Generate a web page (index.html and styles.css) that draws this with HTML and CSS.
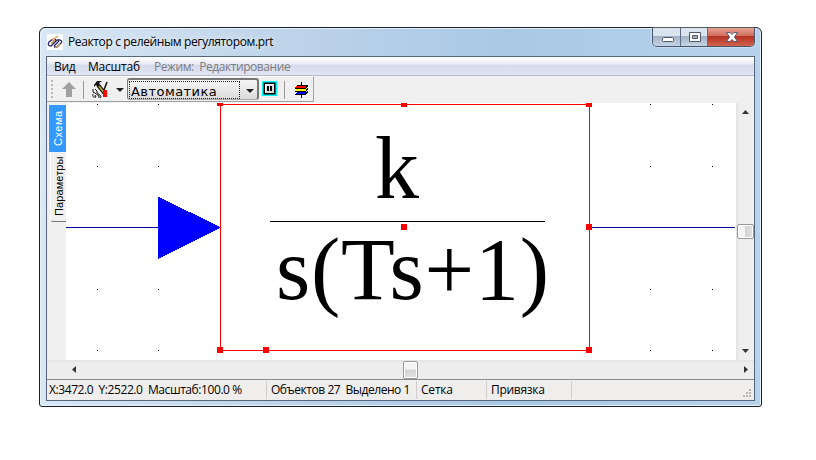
FILE: index.html
```html
<!DOCTYPE html>
<html lang="ru">
<head>
<meta charset="utf-8">
<title>Реактор с релейным регулятором.prt</title>
<link rel="stylesheet" href="styles.css">
</head>
<body>
<main class="window">
  <header class="titlebar">
    <svg class="logo" width="16" height="16" fill="none"><path fill="#fff" d="M0 0h16v16H0z"/><path d="M6 5 2 8q-2 4 2 4l6-6M5 9l4-4M7 12l5-5M10 6h3q3 1 1 3l-4 4H7" stroke="#292968" stroke-width="1.300"/><path d="m5 6 6-4M8 14l5-4M4 10l4-4" stroke="#e89d4c" stroke-width="1.200"/></svg>
    <h1 class="title">Реактор с релейным регулятором.prt</h1>
    <div class="controls">
      <span class="ctl"><svg width="28" height="18"><rect x="9.500" y="9.500" width="11" height="4" rx="1" fill="#fff" stroke="#53576a"/></svg></span>
      <span class="ctl ctl-max"><svg width="26" height="18"><path fill="#fff" fill-rule="evenodd" stroke="#53576a" d="M8.500 4.500h11v9h-11zM11.500 7.500v3h5v-3z"/></svg></span>
      <span class="ctl ctl-close"><svg width="46" height="18"><path d="M18.500 4.500h3.500l2 2 2-2h3.500l-3 4.500 3 4.500h-3.500l-2-2-2 2h-3.500l3-4.500z" fill="#fff" stroke="#59566b"/></svg></span>
    </div>
  </header>
  <section class="client">
    <nav class="menu"><span class="m1">Вид</span><span class="m2">Масштаб</span><span class="m3">Режим:&nbsp; Редактирование</span></nav>
    <div class="toolbar">
      <div class="tools">
        <i class="grip"></i>
        <svg class="up" width="14" height="15"><path d="M7 0l7 7h-4v8H4V7H0z" fill="#a0a0a0"/></svg>
        <i class="sep"></i>
        <svg class="hammer" width="17" height="17"><path d="m6 4 8 10" stroke="#111" stroke-width="4"/><path d="m6 4 8 10" stroke="#aaa02a" stroke-width="2"/><path d="M2 4 5 0h5L7 2l1 2-2 2-2-2-2 2z" fill="#111"/><path d="m15 1-3 8" stroke="#111" stroke-width="1.500"/><path d="M11 9h4v7h-4z" fill="#f00"/><path d="M1 8v3l2 1 4 3v2M3 8l2 2v2l3 2q2 2 0 3M1 13q-1 4 3 3l-1-2" fill="none" stroke="#111"/></svg>
        <i class="drop"></i>
        <div class="combo"><span class="combo-label">Автоматика</span><i class="drop"></i></div>
        <svg class="pause" width="15" height="15"><path fill="#00f5f5" d="M0 0h15v15H0z"/><path fill="#000" d="M1.500 1.500h12v12h-12z"/><path fill="#fff" d="M3 3h9v9H3z"/><path fill="#ddd" d="M4 4h8v8H4z"/><path d="M5 5h2v5H5zM8 5h2v5H8z"/></svg>
        <i class="sep sep2"></i>
        <svg class="layers" width="14" height="16" shape-rendering="crispEdges"><path d="M7.500 0v16" stroke="#000"/><path d="M3 3h11l-2 3H1z" fill="#f00"/><path d="M3 6h11l-2 4H1z" fill="#ff0"/><path d="M3 10h10l-2 3H1z" fill="#00f"/><path d="M3 3h10M1 6h11l2-3M1 9h11l2-3M1 12h11l2-3" fill="none" stroke="#000"/></svg>
      </div>
    </div>
    <div class="work">
      <aside class="tabs"><span class="tab tab-on">Схема</span><span class="tab tab-off">Параметры</span></aside>
      <svg class="canvas" width="670" height="257" viewBox="66 103 670 257">
        <g shape-rendering="crispEdges">
          <path class="dots" d="M97 104.500h1M158 104.500h1M650 104.500h1M712 104.500h1M97 166.500h1M158 166.500h1M650 166.500h1M712 166.500h1M97 289.500h1M158 289.500h1M650 289.500h1M712 289.500h1M97 350.500h1M158 350.500h1M650 350.500h1M712 350.500h1"/>
          <path class="wire" d="M66 227.500h93M589 227.500h146"/>
          <path class="arrow" d="M158 196.500v62.500l63-31.500z"/>
          <path class="frame" d="M220.500 104.500h369v246h-369z"/>
          <path class="bar" d="M270 221.500h275"/>
        </g>
        <text class="formula" x="375" y="198">k</text>
        <text class="formula" x="276" y="299" textLength="273">s(Ts+1)</text>
        <path class="handles" shape-rendering="crispEdges" d="M217 103h6v3h-6zM401 103h6v4h-6zM586 103h6v4h-6zM401 224h6v6h-6zM586 224h6v6h-6zM217 347h6v6h-6zM263 347h6v6h-6zM586 347h6v6h-6z"/>
      </svg>
      <div class="vscroll"><svg class="arr" width="7" height="4"><path d="M0 4 3.500 0 7 4z"/></svg><i class="thumb-v"></i><svg class="arr" width="7" height="4"><path d="M0 0h7L3.500 4z"/></svg></div>
    </div>
    <div class="hscroll"><svg class="arr" width="4" height="7"><path d="M4 0v7L0 3.500z"/></svg><i class="thumb-h"></i><svg class="arr" width="4" height="7"><path d="M0 0v7l4-3.500z"/></svg></div>
    <footer class="status">
      <span class="cell c1">X:3472.0&nbsp; Y:2522.0&nbsp; Масштаб:100.0 %</span><span class="cell c2">Объектов 27&nbsp; Выделено 1</span><span class="cell c3">Сетка</span><span class="cell c4">Привязка</span>
      <svg class="size-grip" width="9" height="9"><path fill="#b8b5b5" d="M6 0h2v2H6zM3 3h2v2H3zM6 3h2v2H6zM0 6h2v2H0zM3 6h2v2H3zM6 6h2v2H6z"/></svg>
    </footer>
  </section>
</main>
</body>
</html>
```
FILE: styles.css
```css
* { box-sizing: border-box; }
body { margin: 0; background: #fff; font: 12px "Open Sans", "Noto Sans", sans-serif; color: #000; }
svg { flex: none; }
.window { width: 723px; height: 380px; margin: 27px 0 0 39px; padding: 0 6px 5px; border: 1px solid #1c2026; border-radius: 6px 6px 3px 3px; background: linear-gradient(90deg, #d9e7f5, #bdd3e9 35%, #a9c8e5 65%, #b7d3ec); box-shadow: inset 0 0 0 1px #e5f2fc; }
.titlebar { display: flex; height: 28px; }
.logo { margin: 6px 0 0 1px; }
.title { margin: 5px 0 0 5px; font-size: 12px; line-height: 18px; font-weight: 400; white-space: nowrap; letter-spacing: -.37px; text-shadow: 0 0 6px #fff; }
.controls { display: flex; width: 103px; height: 19px; margin-left: auto; border: 1px solid #47566d; border-top: 0; border-radius: 0 0 5px 5px; overflow: hidden; box-shadow: 0 0 2px #fff; }
.ctl { width: 28px; border-right: 1px solid #5d6d84; background: linear-gradient(#dbe4ee 0 45%, #a2b2c6 46%, #c5d4e5); }
.ctl svg { display: block; }
.ctl-max { width: 27px; }
.ctl-close { width: 46px; border: 0; background: linear-gradient(#e5a394, #cf6a58 45%, #b5301e 46%, #cf6550); }
.client { width: 709px; height: 345px; border: 1px solid #56677d; background: #f0f0f0; }
.menu { display: flex; height: 19px; border-bottom: 1px solid #b6bccc; background: linear-gradient(#fff, #e6eaf5 40%, #d4dbed 45%, #e0e5f5); line-height: 20px; white-space: nowrap; }
.m1 { width: 34px; margin-left: 7px; letter-spacing: -.3px; }
.m2 { width: 66px; letter-spacing: -.2px; }
.m3 { color: #7d7d7d; letter-spacing: -.43px; }
.toolbar { height: 27px; }
.tools { display: flex; width: 267px; height: 26px; border: solid #a0a0a0; border-width: 0 1px 1px 0; border-top: 1px solid #fff; }
.grip { width: 2px; height: 20px; margin: 3px 0 0 4px; background: repeating-linear-gradient(#b8b8b8 0 2px, transparent 2px 4px); }
.up { margin: 5px 0 0 9px; }
.sep { width: 1px; height: 18px; margin: 4px 0 0 7px; background: #999; }
.hammer { margin: 4px 0 0 8px; }
.drop { width: 0; height: 0; margin: 11px 0 0 7px; border: solid transparent; border-width: 4px 4px 0; border-top-color: #222; }
.combo { display: flex; width: 132px; height: 22px; margin: 1px 0 0 3px; border: 2px solid #777; border-left-width: 1px; border-bottom: 1px solid #aaa; border-radius: 3px; background: linear-gradient(#f5f5f5, #eaeaea 50%, #d9d9d9); }
.combo-label { width: 111px; height: 18px; margin: 1px; padding-left: 1px; border: 1px dotted #222; font: 13px/19px "DejaVu Sans", sans-serif; letter-spacing: .45px; white-space: nowrap; }
.combo .drop { margin: 9px 0 0 5px; }
.pause { margin: 4px 0 0 3px; }
.sep2 { margin-left: 7px; }
.layers { margin: 5px 0 0 9px; }
.work { display: flex; height: 257px; }
.tabs { width: 19px; padding-top: 2px; }
.tab { display: flex; align-items: center; justify-content: center; writing-mode: vertical-rl; transform: rotate(180deg); font: 11px "Liberation Sans", sans-serif; }
.tab-on { width: 17px; height: 47px; margin-left: 2px; background: #3399ff; color: #fff; letter-spacing: .5px; }
.tab-off { width: 16px; height: 70px; margin-left: 3px; border-top: 1px solid #777; border-right: 1px solid #fff; border-radius: 0 3px 0 0; letter-spacing: .1px; }
.canvas { display: block; flex: none; background: #fff; }
.dots, .bar { stroke: #000; }
.wire { stroke: #00009c; }
.arrow { fill: #00f; }
.frame { fill: none; stroke: #f00; }
.handles { fill: #f00; }
.formula { font: 88px "Liberation Serif", serif; }
.vscroll { display: flex; flex-direction: column; align-items: center; width: 18px; padding: 7px 0; background: linear-gradient(90deg, #e2e2e2, #efefef 4px); }
.arr { fill: #333; }
.thumb-v, .thumb-h { display: block; flex: none; border: 1px solid #999; border-radius: 2px; box-shadow: inset 0 0 0 1px #fff; }
.thumb-v { width: 17px; height: 15px; margin: 110px 0; background: linear-gradient(90deg, #f4f4f4 45%, #d3d3d6 50%, #e2e2e2); }
.hscroll { display: flex; align-items: center; height: 19px; padding-left: 25px; background: linear-gradient(#e4e4e4, #ededed 4px); }
.thumb-h { width: 15px; height: 18px; margin: 0 326px 0 327px; background: linear-gradient(#f4f4f4 45%, #d3d3d6 50%, #e2e2e2); }
.status { display: flex; height: 21px; border-top: 1px solid #8a8a8a; background: #f0eeed; line-height: 21px; white-space: nowrap; }
.cell { height: 18px; margin-top: 1px; border-right: 1px solid #d0cdcd; line-height: 18px; }
.c1 { width: 220px; padding-left: 2px; letter-spacing: -.42px; }
.c2 { width: 150px; padding-left: 4px; letter-spacing: -.46px; }
.c3 { width: 70px; padding-left: 4px; letter-spacing: -.2px; }
.c4 { width: 85px; padding-left: 4px; letter-spacing: -.3px; }
.size-grip { margin: 9px 2px 0 auto; }
```
